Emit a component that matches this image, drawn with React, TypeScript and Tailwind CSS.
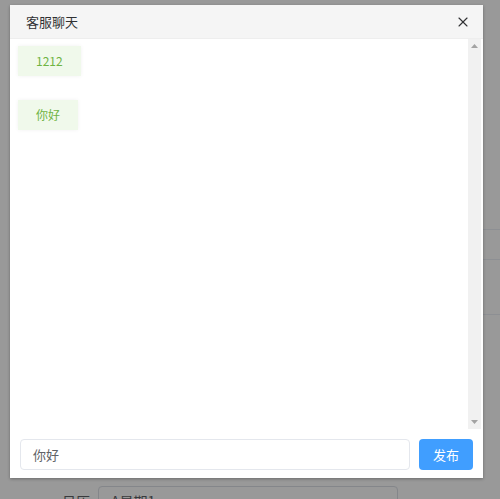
import { X } from "lucide-react";

const font = { fontFamily: '"Microsoft YaHei", "Noto Sans CJK SC", "Noto Sans", sans-serif' };

const messages = ["1212", "你好"];

export default function App() {
    return (
        <div className="relative w-[500px] h-[499px] overflow-hidden bg-white" style={font}>
            {/* page behind the modal */}
            <div className="absolute left-0 top-[486px] flex items-center gap-2 pl-[62px]">
                <span className="text-sm text-[#606266]">日历</span>
                <div className="w-[300px] h-[30px] border border-[#dcdfe6] rounded px-3 text-sm text-[#606266] leading-[28px]">
                    A星期1
                </div>
            </div>
            <div className="absolute right-0 top-[200px] w-[20px] flex flex-col">
                <div className="h-[30px] border-b border-[#ebeef5]" />
                <div className="h-[30px] border-b border-[#ebeef5]" />
                <div className="h-[55px] border-b border-[#ebeef5]" />
            </div>

            {/* overlay */}
            <div className="absolute inset-0 bg-black/40 pl-[10px] pt-[5px]">
                {/* dialog */}
                <div className="w-[473px] h-[473px] bg-white flex flex-col shadow-[0_1px_3px_rgba(0,0,0,0.3)]">
                    <div className="h-[34px] shrink-0 bg-[#f5f5f5] border-b border-[#eeeeee] flex items-center justify-between pl-4 pr-[12px]">
                        <span className="text-[13px] text-[#303133]">客服聊天</span>
                        <X size={16} strokeWidth={1.6} className="text-[#303133]" />
                    </div>
                    <div className="flex-1 flex pr-[2px]">
                        <div className="flex-1 pl-2 pt-[7px] flex flex-col gap-6 items-start">
                            {messages.map((m) => (
                                <div
                                    key={m}
                                    className="h-[30px] px-[18px] flex items-center bg-[#f0f9eb] text-[#6fb443] text-xs shadow-[0_0_4px_rgba(0,0,0,0.06)]"
                                >
                                    {m}
                                </div>
                            ))}
                        </div>
                        {/* scrollbar */}
                        <div className="w-[13px] bg-[#f1f1f1] flex flex-col items-center justify-between py-[5px]">
                            <svg width="7" height="4" viewBox="0 0 7 4">
                                <path d="M0 4 L3.5 0 L7 4 Z" fill="#a3a3a3" />
                            </svg>
                            <svg width="7" height="4" viewBox="0 0 7 4">
                                <path d="M0 0 L3.5 4 L7 0 Z" fill="#a3a3a3" />
                            </svg>
                        </div>
                    </div>
                    <div className="h-[49px] shrink-0 flex items-start gap-[9px] px-[10px] pt-[10px]">
                        <div className="flex-1 h-[31px] border border-[#e4e7ed] rounded flex items-center px-3 text-[13px] text-[#606266]">
                            你好
                        </div>
                        <button className="w-[54px] h-[31px] rounded bg-[#409eff] text-white text-[13px]">
                            发布
                        </button>
                    </div>
                </div>
            </div>
        </div>
    );
}
